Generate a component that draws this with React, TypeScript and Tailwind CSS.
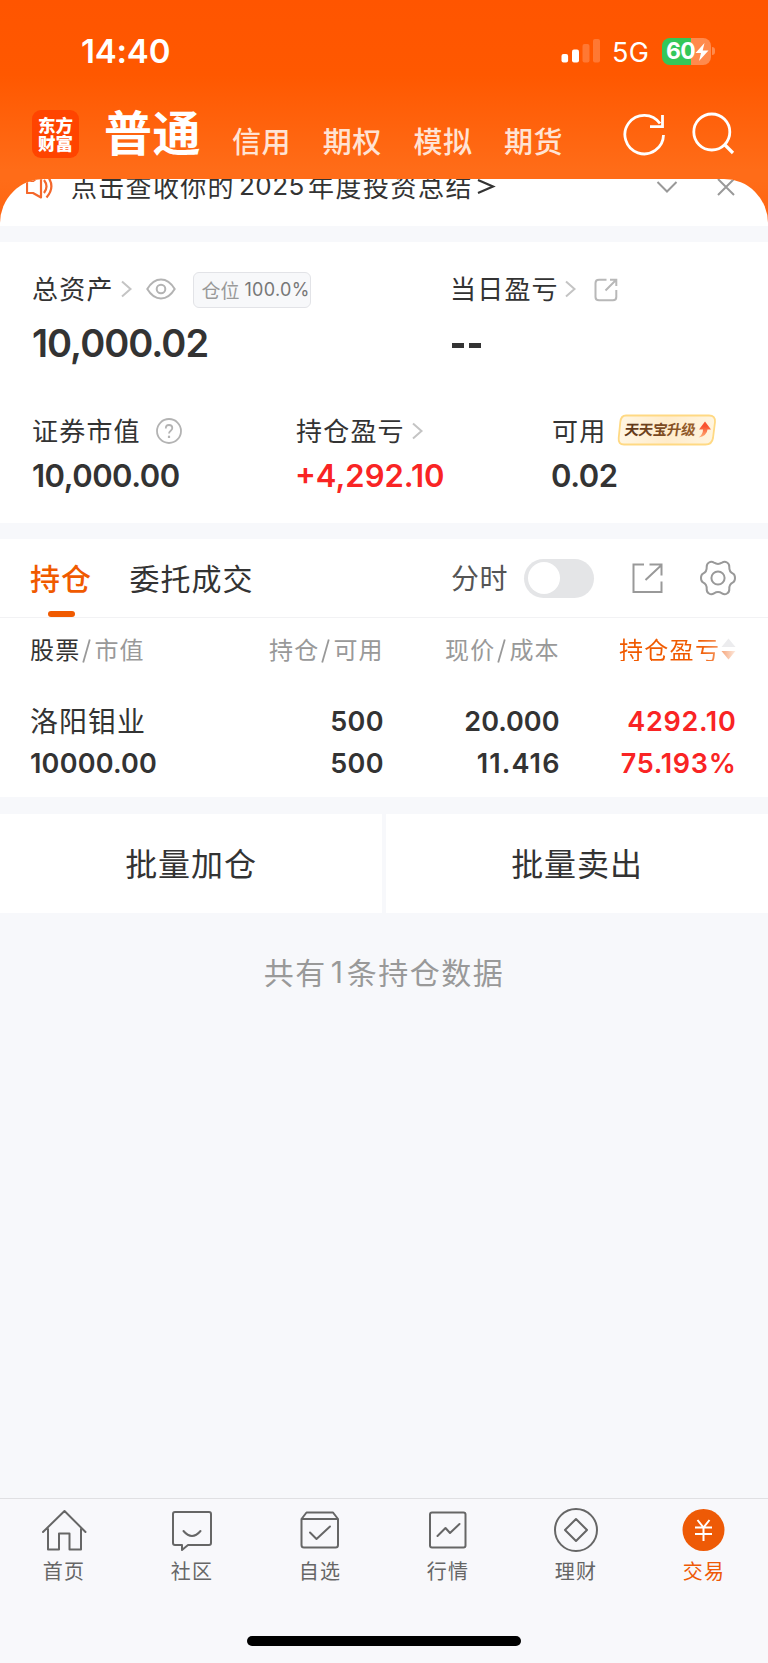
import type { ReactNode } from "react";

const CJK = "font-['Noto_Sans_CJK_SC',sans-serif] whitespace-nowrap leading-none";
const NUM = "font-['Inter',sans-serif] whitespace-nowrap leading-none";

function Chevron({ className = "" }: { className?: string }) {
  return (
    <svg className={`shrink-0 ${className}`} width="12" height="18" viewBox="0 0 12 18" fill="none" stroke="#c4c4c4" strokeWidth="2">
      <path d="M1 1.5 L9.500 9 L1 16.5" />
    </svg>
  );
}

function StatusBar() {
  return (
    <div className="flex h-[102px] items-center pl-[81px]">
      <span className={`${NUM} mt-[1px] w-[480px] text-[33px] font-semibold tracking-[-0.200px]`}>14:40</span>
      <svg width="40" height="26" viewBox="0 0 40 26" fill="#fff">
        <rect x="0.5" y="16" width="6.6" height="8.5" rx="2" />
        <rect x="11" y="11.5" width="7" height="13" rx="2" />
        <rect x="21.500" y="6" width="7" height="18.500" rx="2" opacity="0.2" />
        <rect x="32" y="1" width="7" height="23.500" rx="2" opacity="0.2" />
      </svg>
      <span className={`${NUM} ml-[11px] mt-[2px] w-[50px] text-[27px] tracking-[0.300px]`}>5G</span>
      <div className="relative flex h-[27px] w-[49px] items-center overflow-hidden rounded-[8px] bg-[linear-gradient(90deg,#34c759_60%,#ff8a4d_60%)] pl-[4px]">
        <span className={`${NUM} text-[23px] font-bold tracking-[-0.700px]`}>60</span>
        <svg className="absolute left-[33px] top-[5px]" width="14" height="18" viewBox="0 0 14 18" fill="#fff">
          <path d="M9.500 0 L0.500 10 H6 L4 18 L13.500 7.500 H7.700 Z" />
        </svg>
      </div>
      <div className="ml-[1px] h-[8px] w-[3px] rounded-r-full bg-[#ff8a4d]" />
    </div>
  );
}

function NavBar() {
  return (
    <div className="flex h-[77px] items-start pl-[32px]">
      <div className="mt-[8px] flex h-[48px] w-[47px] flex-col items-center justify-center rounded-[9px] bg-[#ff4400] pb-[1px]">
        <span className={`${CJK} text-[17.500px] font-black leading-[19px]`}>东方</span>
        <span className={`${CJK} text-[17.500px] font-black leading-[19px]`}>财富</span>
      </div>
      <span className={`${CJK} ml-[25px] mt-[4px] w-[128px] text-[48px] font-bold tracking-[0.500px]`}>普通</span>
      <div className="mt-[24px] flex w-[390px] text-[#ffe3d4]">
        {["信用", "期权", "模拟", "期货"].map((t) => (
          <span key={t} className={`${CJK} w-[90.700px] text-[29px] font-medium tracking-[0.500px]`}>{t}</span>
        ))}
      </div>
      <svg className="mt-[10px]" width="44" height="46" viewBox="622 112 44 46" fill="none" stroke="#fff" strokeWidth="2.800">
        <path d="M663.500 135 A19.300 19.300 0 1 1 660 123.500" />
        <path d="M662.500 115 V126.700 H650" />
      </svg>
      <svg className="ml-[26px] mt-[10px]" width="44" height="46" viewBox="692 112 44 46" fill="none" stroke="#fff" strokeWidth="2.800">
        <circle cx="711.800" cy="132" r="18" />
        <path d="M724.500 144.500 L733 153" strokeWidth="3.200" />
      </svg>
    </div>
  );
}

function Notice() {
  return (
    <div className="h-[47px] overflow-hidden rounded-t-[44px] bg-white">
      <div className="-mt-[8px] flex h-[30px] items-center pl-[26px] text-[#333]">
        <svg width="28" height="28" viewBox="26 172 28 28" fill="none" stroke="#f4682c" strokeWidth="2.200">
          <path d="M27 181 H33 L41 175 V197.500 L33 193 H27 Z" strokeLinejoin="round" />
          <path d="M44 180 Q49 186.500 44 193 M47 175.500 Q56 186.500 46.500 197.500" />
        </svg>
        <span className={`${CJK} -mt-[1px] ml-[17px] w-[168px] text-[26px] tracking-[1.300px]`}>点击查收你的</span>
        <span className={`${NUM} w-[69px] text-[26px] tracking-[0.500px]`}>2025</span>
        <span className={`${CJK} -mt-[1px] w-[166px] text-[26px] tracking-[1.500px]`}>年度投资总结</span>
        <svg className="ml-[2px] mt-[1px]" width="20" height="18" viewBox="0 0 20 18" fill="none" stroke="#333" strokeWidth="2.200">
          <path d="M2 2 L17 8.500 L2 15" />
        </svg>
        <svg className="ml-[160px] mt-[2px]" width="22" height="14" viewBox="0 0 22 14" fill="none" stroke="#999" strokeWidth="2">
          <path d="M1.500 2 L11 11.500 L20.500 2" />
        </svg>
        <svg className="ml-[38px] mt-[2px]" width="20" height="20" viewBox="0 0 20 20" fill="none" stroke="#999" strokeWidth="2">
          <path d="M2 2 L18 18 M18 2 L2 18" />
        </svg>
      </div>
    </div>
  );
}

function UpgradeBadge() {
  return (
    <svg className="-mt-[3px] ml-[11px] shrink-0" width="100" height="32" viewBox="0 0 100 32">
      <defs>
        <linearGradient id="gold" x1="0" x2="1">
          <stop offset="0" stopColor="#fff6e3" />
          <stop offset="0.500" stopColor="#ffeccb" />
          <stop offset="1" stopColor="#fff5e0" />
        </linearGradient>
        <linearGradient id="brown" x1="0" x2="1">
          <stop offset="0" stopColor="#5b3418" />
          <stop offset="1" stopColor="#9a602c" />
        </linearGradient>
        <linearGradient id="up" x1="0" x2="0" y1="0" y2="1">
          <stop offset="0.300" stopColor="#f9532f" />
          <stop offset="1" stopColor="#ffb27a" />
        </linearGradient>
      </defs>
      <path d="M9 1.500 H92 Q98.500 1.500 98 8 L96 24 Q95 30.500 88.500 30.500 H7 Q1 30.500 1.700 24 L3.300 8 Q4 1.500 9 1.500 Z" fill="url(#gold)" stroke="#ffd983" strokeWidth="1.800" />
      <text x="10" y="21.500" transform="skewX(-8)" fontFamily="Noto Sans CJK SC, sans-serif" fontSize="14.500" fontWeight="700" fill="url(#brown)" textLength="71">天天宝升级</text>
      <path d="M88 7.500 L94 15.500 H90.500 Q90 22 81.500 23.500 Q86 20.500 86 15.500 H82 Z" fill="url(#up)" />
    </svg>
  );
}

function Assets() {
  const label = `${CJK} text-[26px] tracking-[1.200px] -mt-[2px]`;
  const value = `${NUM} text-[31px] font-semibold`;
  return (
    <section className="h-[281px] bg-white pt-[27px] text-[#333]">
      <div className="flex h-[40px] items-center pl-[32px]">
        <div className="flex w-[418px] items-center">
          <span className={label}>总资产</span>
          <Chevron className="ml-[7px]" />
          <svg className="ml-[13px]" width="30" height="22" viewBox="0 0 30 22" fill="none" stroke="#b3b3b3" strokeWidth="2">
            <path d="M1.300 11 Q7 1.500 15 1.500 Q23 1.500 28.700 11 Q23 20.500 15 20.500 Q7 20.500 1.300 11 Z" />
            <circle cx="15" cy="11" r="4.300" />
          </svg>
          <div className="ml-[17px] mt-[2px] flex h-[36px] w-[118px] items-center rounded-[6px] border border-[#e2e3e7] bg-[#f7f8fa] pl-[8px]">
            <span className={`${CJK} -mt-[1px] w-[43px] text-[19px] text-[#999]`}>仓位</span>
            <span className={`${NUM} text-[18px] tracking-[0.300px] text-[#777]`}>100.0%</span>
          </div>
        </div>
        <span className={label}>当日盈亏</span>
        <Chevron className="ml-[6px]" />
        <svg className="ml-[17px] mt-[2px]" width="24" height="24" viewBox="0 0 24 24" fill="none" stroke="#b8b8b8" strokeWidth="2">
          <path d="M12.500 1.700 H5 Q1.500 1.700 1.500 5 V19 Q1.500 22.300 5 22.300 H19 Q22.300 22.300 22.300 19 V12" />
          <path d="M11.500 12.500 L22 2 M16 1.700 H22.300 V8" />
        </svg>
      </div>
      <div className="mt-[14px] flex h-[40px] items-center pl-[32px]">
        <span className={`${NUM} w-[418px] text-[38px] font-semibold tracking-[-1px]`}>10,000.02</span>
        <div className="mt-[5px] flex gap-[5px] pl-[2px]">
          <span className="h-[5px] w-[12px] bg-[#333]" />
          <span className="h-[5px] w-[12px] bg-[#333]" />
        </div>
      </div>
      <div className="mt-[48px] flex h-[40px] items-center pl-[32px]">
        <div className="flex w-[264px] items-center">
          <span className={label}>证券市值</span>
          <svg className="ml-[15px]" width="26" height="26" viewBox="0 0 26 26" fill="none" stroke="#b3b3b3" strokeWidth="1.800">
            <circle cx="13" cy="13" r="12" />
            <path d="M9.800 10.500 Q9.800 7 13 7 Q16.300 7 16.300 10 Q16.300 11.500 14.700 12.700 Q13 14 13 15.500" />
            <path d="M13 17.700 V20" strokeWidth="2.200" />
          </svg>
        </div>
        <div className="flex w-[256px] items-center">
          <span className={label}>持仓盈亏</span>
          <Chevron className="ml-[7px]" />
        </div>
        <span className={label}>可用</span>
        <UpgradeBadge />
      </div>
      <div className="mt-[4px] flex h-[40px] items-center pl-[32px]">
        <span className={`${value} w-[263px] tracking-[-0.500px]`}>10,000.00</span>
        <span className={`${value} w-[256px] text-[#f92424]`}>+4,292.10</span>
        <span className={`${value} tracking-[-0.400px]`}>0.02</span>
      </div>
    </section>
  );
}

function Tabs() {
  return (
    <div className="flex h-[79px] items-center border-b border-[#f2f2f4] bg-white pl-[30px] text-[#333]">
      <div className="flex h-full w-[99.500px] flex-col">
        <span className={`${CJK} mt-[23px] text-[30px] font-medium tracking-[1px] text-[#f05a00]`}>持仓</span>
        <span className="ml-[18px] mt-auto h-[6px] w-[27px] rounded-[3px] bg-[#f05a00]" />
      </div>
      <span className={`${CJK} -mt-[3px] w-[321.500px] text-[30px] tracking-[1px]`}>委托成交</span>
      <span className={`${CJK} -mt-[2px] w-[73px] text-[28px] tracking-[0.500px] text-[#555]`}>分时</span>
      <div className="flex h-[39px] w-[70px] items-center rounded-full bg-[#e4e5e7] pl-[4px]">
        <span className="h-[32px] w-[32px] rounded-full bg-white" />
      </div>
      <svg className="ml-[37px]" width="32" height="32" viewBox="632 562 32 32" fill="none" stroke="#999" strokeWidth="2">
        <path d="M645 564.500 H634.500 V592 H662.500 V581.500" />
        <path d="M646.500 580 L662 565.500 M650.500 564.500 H662.500 V575.500" />
      </svg>
      <svg className="ml-[36px]" width="38" height="38" viewBox="-19 -19 38 38" fill="none" stroke="#999" strokeWidth="2">
        <circle r="6.600" />
        <path strokeLinejoin="round" d="M-9 -15.500 Q-6.500 -17 -4 -15.300 Q0 -12.800 4 -15.300 Q6.500 -17 9 -15.500 Q11.500 -14 11.300 -11 Q11 -6.300 15 -4.300 Q17 -3.300 17 0 Q17 3.300 15 4.300 Q11 6.300 11.300 11 Q11.500 14 9 15.500 Q6.500 17 4 15.300 Q0 12.800 -4 15.300 Q-6.500 17 -9 15.500 Q-11.500 14 -11.300 11 Q-11 6.300 -15 4.300 Q-17 3.300 -17 0 Q-17 -3.300 -15 -4.300 Q-11 -6.300 -11.300 -11 Q-11.500 -14 -9 -15.500 Z" />
      </svg>
    </div>
  );
}

function Pair({ a, b, dark = false, className = "" }: { a: string; b: string; dark?: boolean; className?: string }) {
  return (
    <div className={`flex items-center text-[24px] text-[#999] ${className}`}>
      <span className={`${CJK} tracking-[1.200px] ${dark ? "text-[#333]" : ""}`}>{a}</span>
      <svg className="ml-[2px] mr-[3px] mt-[3px]" width="9" height="26" viewBox="0 0 9 26" stroke="currentColor" strokeWidth="1.800">
        <path d="M7.800 1.500 L1.200 24.500" />
      </svg>
      <span className={`${CJK} tracking-[1.200px]`}>{b}</span>
    </div>
  );
}

function Holdings() {
  const cell = `${NUM} text-[27px] font-semibold`;
  return (
    <section className="h-[179px] bg-white text-[#333]">
      <div className="flex h-[62px] items-center pl-[30px]">
        <Pair a="股票" b="市值" dark className="w-[239px]" />
        <Pair a="持仓" b="可用" className="w-[176px]" />
        <Pair a="现价" b="成本" className="w-[174px]" />
        <span className={`${CJK} bg-[linear-gradient(90deg,#f05a00_80%,#f59a66)] bg-clip-text text-[24px] tracking-[1.300px] text-transparent`}>持仓盈亏</span>
        <svg className="ml-[1px]" width="15" height="22" viewBox="0 0 15 22">
          <defs>
            <linearGradient id="sort" x1="0" x2="1">
              <stop offset="0" stopColor="#f6a67c" />
              <stop offset="1" stopColor="#fdeade" />
            </linearGradient>
          </defs>
          <path d="M7.500 0.500 L14.500 9 H0.500 Z" fill="#ececee" />
          <path d="M7.500 21.500 L14.500 13 H0.500 Z" fill="url(#sort)" />
        </svg>
      </div>
      <div className="mt-[20px] flex h-[42px] items-center pl-[30px]">
        <span className={`${CJK} -mt-[3px] w-[201px] text-[28px] tracking-[1px]`}>洛阳钼业</span>
        <span className={`${cell} w-[153px] text-right tracking-[0.400px]`}>500</span>
        <span className={`${cell} w-[175.500px] text-right`}>20.000</span>
        <span className={`${cell} w-[177px] text-right tracking-[0.700px] text-[#f92424]`}>4292.10</span>
      </div>
      <div className="flex h-[42px] items-center pl-[30px]">
        <span className={`${cell} w-[201px] tracking-[0.200px]`}>10000.00</span>
        <span className={`${cell} w-[153px] text-right tracking-[0.400px]`}>500</span>
        <span className={`${cell} w-[176.500px] text-right tracking-[1.100px]`}>11.416</span>
        <span className={`${cell} w-[176px] text-right tracking-[0.700px] text-[#f92424]`}>75.193%</span>
      </div>
    </section>
  );
}

function TabItem({ label, active = false, children }: { label: string; active?: boolean; children: ReactNode }) {
  return (
    <div className={`flex w-[128px] flex-col items-center ${active ? "text-[#ee5a06]" : "text-[#666]"}`}>
      <svg width="48" height="48" viewBox="-24 -24 48 48" fill="none" stroke="currentColor" strokeWidth="2" strokeLinejoin="round" strokeLinecap="round">
        {children}
      </svg>
      <span className={`${CJK} mt-[7px] text-[20px] tracking-[1.200px]`}>{label}</span>
    </div>
  );
}

function BottomBar() {
  return (
    <footer className="flex h-[165px] flex-col border-t border-[#e0e0e3] bg-[#f8f8fb]">
      <div className="flex h-[137px] pt-[7px]">
        <TabItem label="首页">
          <path d="M-21 2 L0.500 -19 L21.500 2 M-16 -1 V19.500 H-5 V3.500 H5.500 V19.500 H17 V-1" />
        </TabItem>
        <TabItem label="社区">
          <path d="M-17 -18 H17 Q19 -18 19 -16 V13 Q19 15 17 15 H-4 L-10 20 V15 H-17 Q-19 15 -19 13 V-16 Q-19 -18 -17 -18 Z" />
          <path d="M-8.500 1 Q0 11 8.500 1" />
        </TabItem>
        <TabItem label="自选">
          <path d="M-18.500 -11 L-13.500 -17.500 H13 L18 -11 V15 Q18 17.500 15.500 17.500 H-16 Q-18.500 17.500 -18.500 15 Z M-18.500 -11 H18" />
          <path d="M-10 2.500 L-3.500 9 L10 -3.500" />
        </TabItem>
        <TabItem label="行情">
          <rect x="-18" y="-17.500" width="35.500" height="35" rx="2" />
          <path d="M-10.500 6 L-2.500 -2 L2 3 L11.500 -6" />
        </TabItem>
        <TabItem label="理财">
          <circle r="21" />
          <path d="M0 -11 L11 0 L0 11 L-11 0 Z" />
        </TabItem>
        <TabItem label="交易" active>
          <circle cx="-0.500" r="21" fill="currentColor" stroke="none" />
          <path stroke="#fff" strokeWidth="2" strokeLinecap="butt" d="M-6.500 -10 L-0.500 -2.500 L5.500 -10 M-0.500 -3 V11 M-9 -2.500 H8 M-9 4 H8" />
        </TabItem>
      </div>
      <div className="mx-auto h-[10px] w-[274px] rounded-full bg-black" />
    </footer>
  );
}

export default function App() {
  return (
    <div className="flex h-[1663px] w-[768px] flex-col overflow-hidden bg-[#f7f8fb]">
      <header className="h-[226px] bg-[linear-gradient(180deg,#ff5500_0px,#ff5800_75px,#ff6c18_170px,#ff6c18_180px,#ff6410_226px)] text-white">
        <StatusBar />
        <NavBar />
        <Notice />
      </header>
      <main className="flex flex-1 flex-col">
        <div className="h-[16px]" />
        <Assets />
        <div className="h-[16px]" />
        <Tabs />
        <Holdings />
        <div className="mt-[17px] flex h-[99px] gap-[4px] text-[#333]">
          {["批量加仓", "批量卖出"].map((t) => (
            <button key={t} className={`${CJK} flex-1 bg-white pb-[3px] text-[32px] tracking-[0.900px]`}>{t}</button>
          ))}
        </div>
        <p className="mt-[42px] flex items-center justify-center text-[#999]">
          <span className={`${CJK} text-[30px] tracking-[1.500px]`}>共有</span>
          <span className={`${NUM} mx-[4px] mt-[2px] text-[30px]`}>1</span>
          <span className={`${CJK} text-[30px] tracking-[1.500px]`}>条持仓数据</span>
        </p>
      </main>
      <BottomBar />
    </div>
  );
}
